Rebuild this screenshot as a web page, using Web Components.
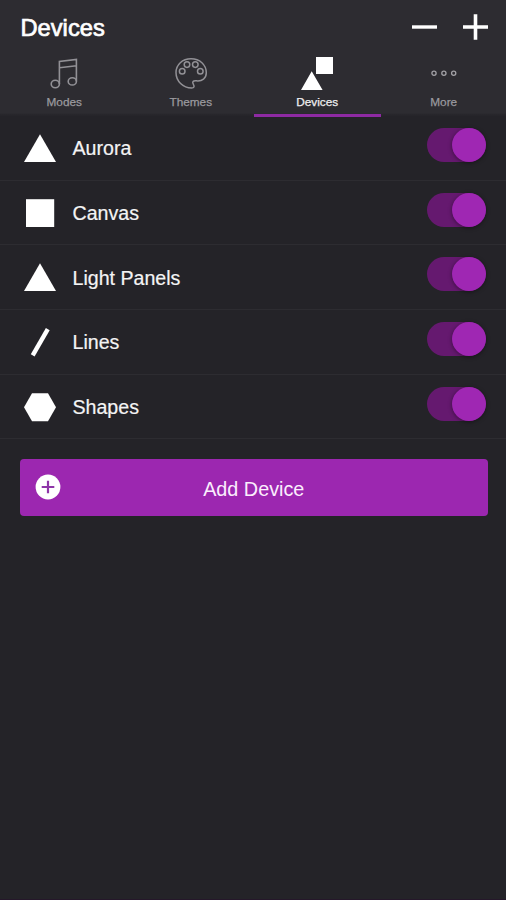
<!DOCTYPE html>
<html lang="en">
<head>
<meta charset="utf-8">
<title>Devices</title>
<style>
  body {
    margin: 0;
    background: #242328;
    color: #f4f4f5;
    font-family: "Liberation Sans", Arial, sans-serif;
    --accent: #9c27b0;
    --header: #2d2c31;
  }
</style>
</head>
<body>
<device-app></device-app>

<script>
const icons = {
  modes: `<svg width="30" height="34" viewBox="0 0 30 34" fill="none" stroke="#929196" stroke-width="1.6">
    <path d="M10.4 28V5.4L27.4 3.4V25.2M10.4 11.8L27.4 9.8"/>
    <ellipse cx="6.3" cy="28" rx="4.1" ry="3.8"/>
    <ellipse cx="23.3" cy="25.4" rx="4.1" ry="3.6"/>
  </svg>`,
  themes: `<svg width="34" height="34" viewBox="0 0 34 34" fill="none" stroke="#929196" stroke-width="1.5">
    <path d="M17 2.8C8.4 2.8 2 8.7 2 16.5C2 25.2 9 32 17.7 32C20 32 20.7 30.4 19.5 28.6C17.8 26 19 24.4 22.4 24.8C28.2 25.4 32.3 22.2 32.3 16.8C32.3 8.6 25.7 2.8 17 2.8Z"/>
    <circle cx="8.2" cy="15.3" r="2.8"/>
    <circle cx="13" cy="8.6" r="2.8"/>
    <circle cx="21.3" cy="8.6" r="2.8"/>
    <circle cx="26.3" cy="15.3" r="2.8"/>
  </svg>`,
  devices: `<svg width="34" height="34" viewBox="0 0 34 34" fill="#fff">
    <path d="M16 0.9h17v17h-17zM11.7 15.2L22.6 33.9H1z"/>
  </svg>`,
  more: `<svg width="30" height="34" viewBox="0 0 30 34" fill="none" stroke="#a2a1a6" stroke-width="1.3">
    <circle cx="5" cy="17.2" r="2.1"/><circle cx="14.9" cy="17.2" r="2.1"/><circle cx="24.7" cy="17.2" r="2.1"/>
  </svg>`,
  minus: `<svg width="27" height="28" viewBox="0 0 27 28"><path d="M1 14h25" stroke="#fff" stroke-width="3.4"/></svg>`,
  plus: `<svg width="27" height="28" viewBox="0 0 27 28"><path d="M1 14h25M13.5 1.2v25.6" stroke="#fff" stroke-width="3.6"/></svg>`,
  triangle: `<svg width="34" height="34" viewBox="0 0 34 34"><path d="M17 3.2L33 31H1z" fill="#fff"/></svg>`,
  square: `<svg width="34" height="34" viewBox="0 0 34 34"><path d="M3 3.2h28.2v27.8h-28.2z" fill="#fff"/></svg>`,
  line: `<svg width="34" height="34" viewBox="0 0 34 34"><path d="M9.7 30.4L24.8 4.2" stroke="#fff" stroke-width="4.4"/></svg>`,
  hexagon: `<svg width="34" height="34" viewBox="0 0 34 34"><path d="M9 3.2h16l8 14-8 14H9l-8-14z" fill="#fff"/></svg>`,
  add: `<svg width="26" height="26" viewBox="0 0 26 26"><circle cx="13" cy="13" r="12.4" fill="#fff"/><path d="M6.7 13h12.6M13 6.7v12.6" stroke="#8e35a8" stroke-width="2.2"/></svg>`
};

class AppIcon extends HTMLElement {
  constructor() {
    super();
    this.attachShadow({ mode: 'open' });
  }

  connectedCallback() {
    this.shadowRoot.innerHTML = `
      <style>
        :host { display: block; flex: none; }
        svg { display: block; }
      </style>
      ${icons[this.getAttribute('name')]}
    `;
  }
}

class AppTab extends HTMLElement {
  constructor() {
    super();
    this.attachShadow({ mode: 'open' });
    this.shadowRoot.innerHTML = `
      <style>
        :host {
          display: flex;
          flex-direction: column;
          align-items: center;
          box-sizing: border-box;
          height: 61px;
          border-bottom: 3px solid transparent;
          color: #9b9a9f;
        }
        :host([active]) {
          border-color: #8e2aa3;
          color: #eeeeef;
        }
        .label {
          margin-top: 5px;
          font-size: 11.8px;
          line-height: 14px;
          -webkit-text-stroke: 0.25px currentColor;
        }
      </style>
      <slot name="icon"></slot>
      <div class="label"><slot></slot></div>
    `;
  }
}

class AppHeader extends HTMLElement {
  constructor() {
    super();
    this.attachShadow({ mode: 'open' });
    this.shadowRoot.innerHTML = `
      <style>
        :host {
          display: block;
          box-sizing: border-box;
          height: 116px;
          background: linear-gradient(var(--header) 113px, #26252a 115px);
        }
        .bar {
          display: flex;
          align-items: center;
          height: 56px;
          padding: 0 17px 0 20.5px;
        }
        h1 {
          flex: 1;
          margin: 0;
          font-size: 23.7px;
          font-weight: normal;
          line-height: 56px;
          color: #fff;
          -webkit-text-stroke: 0.7px #fff;
        }
        .actions { display: flex; gap: 24px; padding-bottom: 2px; }
        .tabs {
          display: grid;
          grid-template-columns: repeat(4, 126.5px);
          padding-left: 1px;
          overflow: hidden;
        }
      </style>
      <div class="bar">
        <h1><slot name="title"></slot></h1>
        <div class="actions">
          <app-icon name="minus"></app-icon>
          <app-icon name="plus"></app-icon>
        </div>
      </div>
      <div class="tabs"><slot></slot></div>
    `;
  }
}

class ToggleSwitch extends HTMLElement {
  constructor() {
    super();
    this.attachShadow({ mode: 'open' });
    this.shadowRoot.innerHTML = `
      <style>
        :host {
          display: flex;
          justify-content: flex-end;
          width: 59px;
          height: 34px;
          border-radius: 17px;
          background: #65196f;
        }
        .knob {
          width: 34px;
          height: 34px;
          border-radius: 50%;
          background: #9f27b3;
          box-shadow: 0 1px 4px rgba(0,0,0,0.4);
        }
      </style>
      <div class="knob"></div>
    `;
  }
}

class DeviceRow extends HTMLElement {
  constructor() {
    super();
    this.attachShadow({ mode: 'open' });
    this.shadowRoot.innerHTML = `
      <style>
        :host {
          display: flex;
          align-items: center;
          box-sizing: border-box;
          height: 64.7px;
          padding: 0 20px 0 22.5px;
          border-bottom: 1px solid #2d2c31;
        }
        .name {
          flex: 1;
          margin-left: 16px;
          padding-top: 1px;
          font-size: 19.6px;
          line-height: 24px;
          -webkit-text-stroke: 0.2px currentColor;
        }
        toggle-switch { margin-bottom: 6px; }
      </style>
      <slot name="icon"></slot>
      <div class="name"><slot></slot></div>
      <toggle-switch></toggle-switch>
    `;
  }
}

class AddButton extends HTMLElement {
  constructor() {
    super();
    this.attachShadow({ mode: 'open' });
    this.shadowRoot.innerHTML = `
      <style>
        :host {
          display: grid;
          grid-template-columns: 26px 1fr 26px;
          align-items: center;
          box-sizing: border-box;
          height: 57px;
          margin: 20px 18.5px 0 20px;
          padding: 0 15px;
          border-radius: 4px;
          background: var(--accent);
        }
        app-icon { margin-bottom: 1px; }
        .label {
          padding-top: 3px;
          font-size: 19.8px;
          line-height: 24px;
          text-align: center;
          color: #fbeefd;
        }
      </style>
      <app-icon name="add"></app-icon>
      <div class="label"><slot></slot></div>
    `;
  }
}

class DeviceApp extends HTMLElement {
  constructor() {
    super();
    this.attachShadow({ mode: 'open' });
    this.shadowRoot.innerHTML = `
      <style>
        :host {
          display: block;
          box-sizing: border-box;
          height: 900px;
          border-bottom: 1px solid #25172a;
        }
      </style>
      <app-header>
        <span slot="title">Devices</span>
        <app-tab><app-icon slot="icon" name="modes"></app-icon>Modes</app-tab>
        <app-tab><app-icon slot="icon" name="themes"></app-icon>Themes</app-tab>
        <app-tab active><app-icon slot="icon" name="devices"></app-icon>Devices</app-tab>
        <app-tab><app-icon slot="icon" name="more"></app-icon>More</app-tab>
      </app-header>
      <device-row><app-icon slot="icon" name="triangle"></app-icon>Aurora</device-row>
      <device-row><app-icon slot="icon" name="square"></app-icon>Canvas</device-row>
      <device-row><app-icon slot="icon" name="triangle"></app-icon>Light Panels</device-row>
      <device-row><app-icon slot="icon" name="line"></app-icon>Lines</device-row>
      <device-row><app-icon slot="icon" name="hexagon"></app-icon>Shapes</device-row>
      <add-button>Add Device</add-button>
    `;
  }
}

customElements.define('app-icon', AppIcon);
customElements.define('app-tab', AppTab);
customElements.define('app-header', AppHeader);
customElements.define('toggle-switch', ToggleSwitch);
customElements.define('device-row', DeviceRow);
customElements.define('add-button', AddButton);
customElements.define('device-app', DeviceApp);
</script>
</body>
</html>
